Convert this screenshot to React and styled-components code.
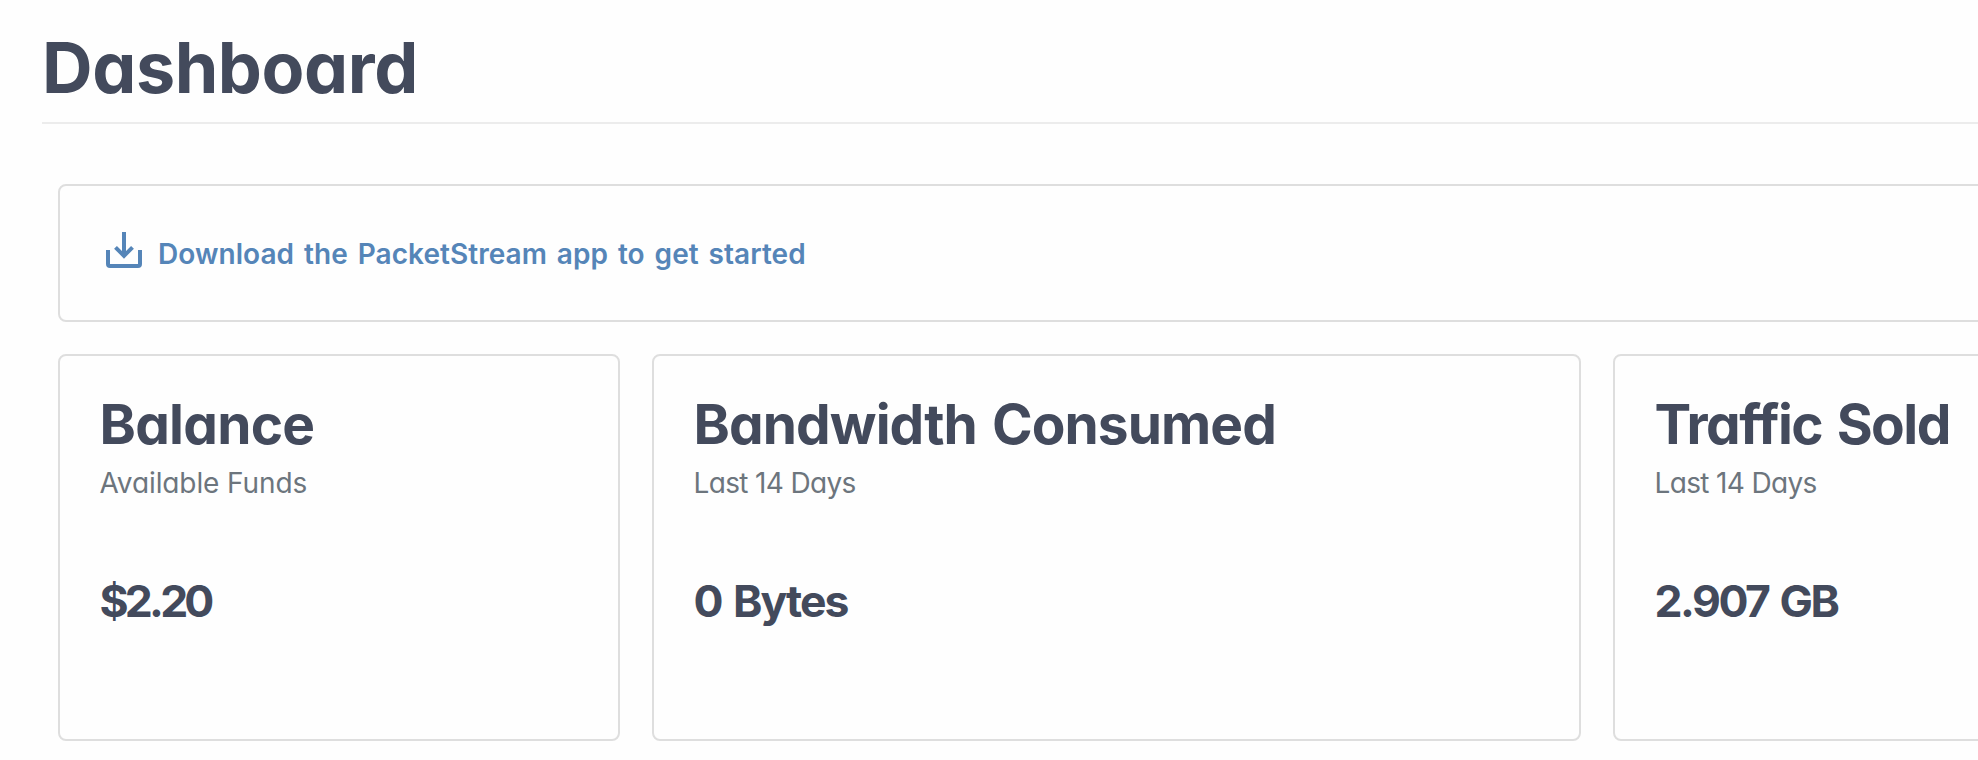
import React from "react";
import styled, { createGlobalStyle } from "styled-components";

const GlobalStyle = createGlobalStyle`
  * { box-sizing: border-box; }
  body {
    margin: 0;
    background: #fefefe;
    color: #434a5c;
    font-family: "Inter", "Liberation Sans", sans-serif;
    overflow: hidden;
  }
`;

const Page = styled.main`
  width: 100%;
  height: 760px;
  padding-left: 42px;
  overflow: hidden;
`;

const Header = styled.header`
  height: 124px;
  padding-top: 26px;
  border-bottom: 2px solid #ececec;
`;

const PageTitle = styled.h1`
  margin: 0;
  font-size: 70px;
  line-height: 84px;
  font-weight: 740;
  letter-spacing: -0.4px;
  font-feature-settings: "cv11";
`;

const Content = styled.div`
  width: 2160px;
  padding: 60px 0 0 16px;
  display: flex;
  flex-direction: column;
  gap: 32px;
`;

const Panel = styled.section`
  background: #fefefe;
  border: 2px solid #dedede;
  border-radius: 8px;
`;

const Banner = styled(Panel)`
  height: 138px;
  padding: 46px;
`;

const DownloadLink = styled.a`
  display: inline-flex;
  gap: 16px;
  color: #5585b8;
  text-decoration: none;
`;

const DownloadLabel = styled.span`
  margin-top: 5px;
  font-size: 28px;
  line-height: 34px;
  font-weight: 600;
  letter-spacing: 0.05px;
  word-spacing: 2.8px;
  white-space: nowrap;
`;

const CardRow = styled.div`
  display: flex;
  gap: 32px;
`;

const Card = styled(Panel)`
  flex: 0 0 ${(p) => p.$width}px;
  height: 387px;
  padding: 35px 39.5px 0;
  white-space: nowrap;
  font-feature-settings: "cv11";
`;

const CardTitle = styled.h2`
  margin: 0;
  font-size: 55px;
  line-height: 66px;
  font-weight: 740;
  letter-spacing: ${(p) => p.$tracking}px;
  word-spacing: 3px;
`;

const CardSubtitle = styled.p`
  margin: 9px 0 0;
  color: #6c757d;
  font-size: 28px;
  line-height: 34px;
  font-weight: 400;
  letter-spacing: ${(p) => p.$tracking}px;
`;

const CardValue = styled.p`
  margin: 74px 0 0;
  font-size: 44.5px;
  line-height: 54px;
  font-weight: 740;
  letter-spacing: ${(p) => p.$tracking}px;
  word-spacing: 3px;
`;

const cards = [
  { title: "Balance", subtitle: "Available Funds", value: "$2.20", width: 562, tracking: [-0.75, -0.1, -3.8] },
  { title: "Bandwidth Consumed", subtitle: "Last 14 Days", value: "0 Bytes", width: 929, tracking: [-0.92, -0.65, -2] },
  { title: "Traffic Sold", subtitle: "Last 14 Days", value: "2.907 GB", width: 562, tracking: [-1.55, -0.65, -2.45] },
];

function DownloadIcon() {
  return (
    <svg width="36" height="36" viewBox="0 0 36 36" fill="none" stroke="currentColor" strokeWidth="4" aria-hidden="true">
      <path d="M18 0V23" />
      <path d="M9.5 15.3L18 23.8L26.5 15.3" />
      <path d="M2 18V32Q2 34 4 34H32Q34 34 34 32V18" />
    </svg>
  );
}

export default function App() {
  return (
    <>
      <GlobalStyle />
      <Page>
        <Header>
          <PageTitle>Dashboard</PageTitle>
        </Header>
        <Content>
          <Banner>
            <DownloadLink href="#download">
              <DownloadIcon />
              <DownloadLabel>Download the PacketStream app to get started</DownloadLabel>
            </DownloadLink>
          </Banner>
          <CardRow>
            {cards.map(({ title, subtitle, value, width, tracking }) => (
              <Card key={title} $width={width}>
                <CardTitle $tracking={tracking[0]}>{title}</CardTitle>
                <CardSubtitle $tracking={tracking[1]}>{subtitle}</CardSubtitle>
                <CardValue $tracking={tracking[2]}>{value}</CardValue>
              </Card>
            ))}
          </CardRow>
        </Content>
      </Page>
    </>
  );
}
